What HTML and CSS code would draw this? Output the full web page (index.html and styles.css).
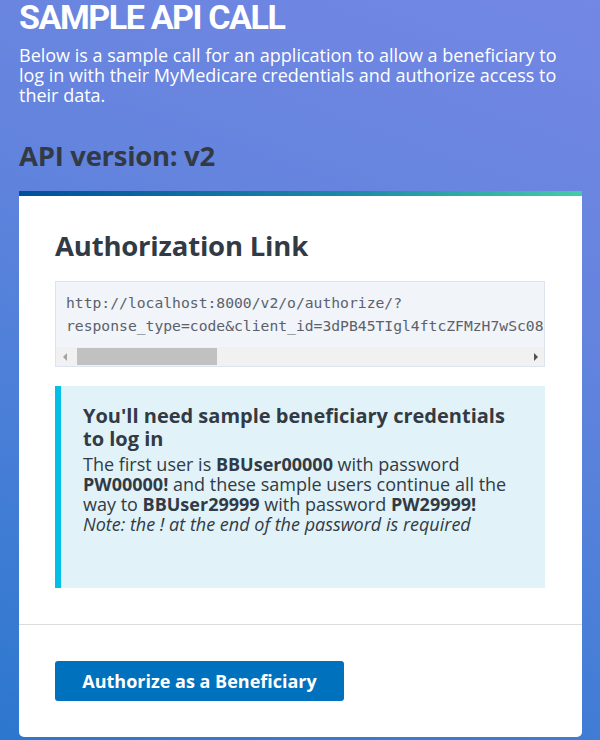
FILE: index.html
```html
<!DOCTYPE html>
<html lang="en">
<head>
<meta charset="utf-8">
<title>Sample API Call</title>
<link rel="stylesheet" href="styles.css">
</head>
<body>
<main class="page">
  <h1 class="title">SAMPLE API CALL</h1>
  <p class="intro">Below is a sample call for an application to allow a beneficiary to log in with their MyMedicare credentials and authorize access to their data.</p>
  <h2 class="version">API version: v2</h2>
  <section class="card">
    <div class="card-body">
      <h3 class="card-title">Authorization Link</h3>
      <div class="code-box">
        <pre class="code">http://localhost:8000/v2/o/authorize/?
response_type=code&amp;client_id=3dPB45TIgl4ftcZFMzH7wSc08nW2uRa2ZEaDsNkc&amp;redirect_uri=http://localhost:8000/testclient/callback&amp;state=abc123</pre>
        <div class="scrollbar">
          <span class="arrow arrow-left"></span>
          <div class="track"><div class="thumb"></div></div>
          <span class="arrow arrow-right"></span>
        </div>
      </div>
      <div class="alert">
        <h4 class="alert-title">You'll need sample beneficiary credentials to log in</h4>
        <p class="alert-text">The first user is <strong>BBUser00000</strong> with password <strong>PW00000!</strong> and these sample users continue all the way to <strong>BBUser29999</strong> with password <strong>PW29999!</strong><br><em>Note: the ! at the end of the password is required</em></p>
      </div>
    </div>
    <div class="card-footer">
      <a class="btn" href="#">Authorize as a Beneficiary</a>
    </div>
  </section>
</main>
</body>
</html>
```
FILE: styles.css
```css
html, body {
  margin: 0;
  padding: 0;
}
body {
  width: 600px;
  height: 740px;
  overflow: hidden;
  background: linear-gradient(20deg, #2c77ce 0%, #4f80d9 40%, #6484de 65%, #7387e4 100%);
  font-family: "Open Sans", "Liberation Sans", sans-serif;
  color: #ffffff;
}
.page {
  padding: 0 18px 0 19px;
}
.title {
  margin: -3px 0 0;
  font-family: Roboto, "Liberation Sans", sans-serif;
  font-weight: 700;
  font-size: 34px;
  line-height: 40px;
  letter-spacing: -1.4px;
  color: #ffffff;
}
.intro {
  margin: 8px 0 0;
  font-size: 18px;
  line-height: 20px;
  color: #ffffff;
}
.version {
  margin: 35px 0 0;
  font-size: 27.5px;
  line-height: 32px;
  font-weight: 700;
  color: #323a45;
  letter-spacing: -0.3px;
}
.card {
  margin-top: 19px;
  background: #ffffff;
  border-top: 5px solid transparent;
  border-image: linear-gradient(90deg, #004f9a 0%, #1e8ca6 60%, #43cca9 100%) 1;
  border-radius: 0 0 5px 5px;
  color: #323a45;
  width: 563px;
  overflow: hidden;
}
.card-body {
  padding: 33px 36px 36px 36px;
  border-bottom: 1px solid #dcdcdc;
}
.card-title {
  margin: 0 0 18px;
  font-size: 27.5px;
  line-height: 34px;
  font-weight: 700;
  letter-spacing: -0.2px;
}
.code-box {
  width: 490px;
  border: 1px solid #dce4ef;
  background: #f1f4f9;
  box-sizing: border-box;
}
.code {
  margin: 0;
  padding: 9px 0 10px 10px;
  font-family: "DejaVu Sans Mono", "Liberation Mono", monospace;
  font-size: 14.7px;
  line-height: 23px;
  color: #5b616b;
  white-space: pre;
  overflow: hidden;
}
.scrollbar {
  display: flex;
  align-items: center;
  height: 19px;
  background: #f1f1f1;
}
.arrow {
  width: 17px;
  height: 19px;
  display: flex;
  align-items: center;
  justify-content: center;
}
.arrow::before {
  content: "";
  width: 0;
  height: 0;
  border-top: 4px solid transparent;
  border-bottom: 4px solid transparent;
}
.arrow-left::before {
  border-right: 4px solid #a3a3a3;
}
.arrow-right::before {
  border-left: 4px solid #505050;
}
.track {
  flex: 1;
  height: 19px;
  display: flex;
  align-items: center;
  padding-left: 4px;
}
.thumb {
  width: 140px;
  height: 17px;
  background: #c1c1c1;
}
.alert {
  margin-top: 19px;
  width: 490px;
  min-height: 202px;
  box-sizing: border-box;
  background: #e1f3f8;
  border-left: 6px solid #02bfe7;
  padding: 18px 22px 20px 22px;
}
.alert-title {
  margin: 0;
  font-size: 20px;
  line-height: 23px;
  font-weight: 700;
  color: #323a45;
}
.alert-text {
  margin: 4px 0 0;
  font-size: 18px;
  line-height: 20px;
  color: #323a45;
}
.alert-text strong {
  font-weight: 700;
}
.card-footer {
  padding: 36px 36px 36px;
}
.btn {
  display: inline-flex;
  align-items: center;
  justify-content: center;
  width: 289px;
  height: 40px;
  background: #0071bc;
  border-radius: 3px;
  color: #ffffff;
  font-weight: 700;
  font-size: 18px;
  text-decoration: none;
}
```
